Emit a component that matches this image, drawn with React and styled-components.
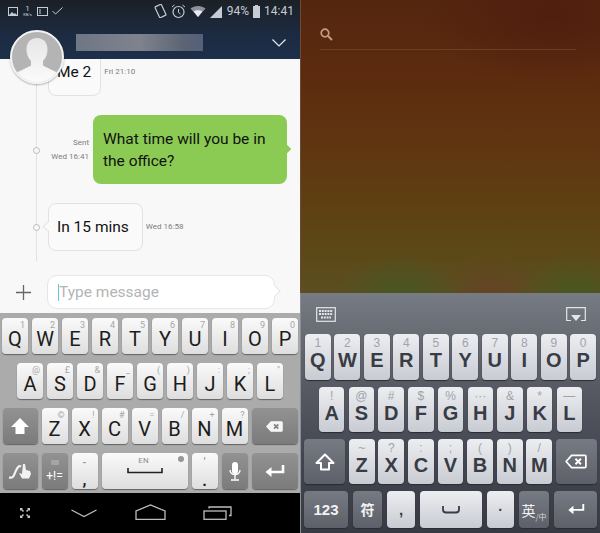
import React from "react";
import styled, { createGlobalStyle } from "styled-components";

const GlobalStyle = createGlobalStyle`
  html, body {
    margin: 0;
    padding: 0;
    background: #000;
  }
`;

const Screen = styled.div`
  display: flex;
  width: 600px;
  height: 533px;
  overflow: hidden;
`;

const Phone = styled.div`
  width: 300px;
  height: 533px;
  display: flex;
  flex-direction: column;
  position: relative;
  font-family: Roboto, "Liberation Sans", sans-serif;
`;

/* left phone */
const Header = styled.div`
  height: 59px;
  flex: none;
  background: linear-gradient(#1b2026, #1c2b42 60%, #1d2f4a);
  display: flex;
  flex-direction: column;
`;
const StatusBar = styled.div`
  height: 20px;
  display: flex;
  align-items: center;
  padding: 1px 6px 0 8px;
  color: #c6ccd4;
  font-size: 12px;
`;
const StatusGroup = styled.div`
  display: flex;
  align-items: center;
  gap: ${(p) => p.$gap || 4}px;
  margin-left: ${(p) => (p.$right ? "auto" : "0")};
`;
const Speed = styled.div`
  display: flex;
  flex-direction: column;
  align-items: center;
  font-size: 8px;
  line-height: 7px;
  width: 11px;
  & small {
    font-size: 4px;
    line-height: 5px;
  }
`;
const TitleRow = styled.div`
  display: flex;
  align-items: center;
  margin-top: 13px;
  height: 17px;
  padding: 0 14px 0 76px;
`;
const BlurName = styled.div`
  width: 127px;
  height: 17px;
  background: linear-gradient(90deg, #6f7684, #7e838e 50%, #5c6474 85%, #54607a);
`;
const Chevron = styled.svg`
  margin-left: auto;
`;
const Avatar = styled.div`
  position: absolute;
  left: 10px;
  top: 30px;
  width: 54px;
  height: 54px;
  box-sizing: border-box;
  border-radius: 50%;
  border: 2px solid #f2f2f2;
  box-shadow: 0 1px 2px rgba(0, 0, 0, 0.3);
  overflow: hidden;
  background: linear-gradient(#b4b4b4 75%, #e8e8e8);
  z-index: 2;
`;
const Chat = styled.div`
  height: 254px;
  flex: none;
  background: #f8f8f9;
  position: relative;
  overflow: hidden;
`;
const Timeline = styled.div`
  position: absolute;
  left: 36px;
  top: 0;
  width: 1px;
  height: 202px;
  background: #e2e2e2;
`;
const MsgRow = styled.div`
  position: relative;
  display: flex;
  align-items: center;
  gap: ${(p) => p.$gap || 3}px;
  justify-content: ${(p) => (p.$out ? "flex-end" : "flex-start")};
  margin-top: ${(p) => p.$top}px;
  padding: ${(p) => (p.$out ? "0 13px 0 0" : "0 0 0 48px")};
`;
const Dot = styled.i`
  position: absolute;
  left: 33px;
  top: 50%;
  margin-top: -3px;
  width: 7px;
  height: 7px;
  box-sizing: border-box;
  border: 1.5px solid #bbb;
  border-radius: 50%;
  background: #f8f8f9;
`;
const Bubble = styled.div`
  position: relative;
  box-sizing: border-box;
  height: ${(p) => (p.$out ? 69 : 48)}px;
  width: ${(p) => (p.$out ? "194px" : "auto")};
  padding: ${(p) => (p.$out ? "12px 10px" : p.$tail ? "0 13px 0 8px" : "0 9px 0 8px")};
  display: flex;
  align-items: center;
  border-radius: 8px;
  font-size: 15.5px;
  line-height: 22px;
  color: #111;
  background: ${(p) => (p.$out ? "#8bcb53" : "#fafafa")};
  border: ${(p) => (p.$out ? "0" : "1.5px solid #e2e2e2")};
  &::after {
    content: "";
    position: absolute;
    top: 50%;
    width: 6px;
    height: 6px;
    margin-top: -4px;
    transform: rotate(45deg);
    ${(p) =>
      p.$out
        ? "right: -3px; background: #8bcb53;"
        : p.$tail
        ? "left: -5px; background: #fafafa; border-left: 1.5px solid #e2e2e2; border-bottom: 1.5px solid #e2e2e2;"
        : "display: none;"}
  }
`;
const Meta = styled.div`
  font-size: 8px;
  line-height: 14px;
  color: #7c7c7c;
  text-align: right;
`;
const InputRow = styled.div`
  display: flex;
  align-items: center;
  margin-top: 24px;
  padding-left: 16px;
  gap: 16px;
`;
const MessageInput = styled.div`
  position: relative;
  box-sizing: border-box;
  width: 228px;
  height: 34px;
  padding-left: 10px;
  display: flex;
  align-items: center;
  background: #fff;
  border: 1.5px solid #e6e6e6;
  border-radius: 10px;
  font-size: 15.5px;
  color: #b4b4b4;
  &::after {
    content: "";
    position: absolute;
    right: -5px;
    top: 50%;
    width: 7px;
    height: 7px;
    margin-top: -5px;
    background: #fff;
    border-right: 1.5px solid #e6e6e6;
    border-top: 1.5px solid #e6e6e6;
    transform: rotate(45deg);
  }
`;
const Caret = styled.i`
  width: 1px;
  height: 17px;
  background: #63c9d2;
`;

const LeftKeyboard = styled.div`
  height: 180px;
  flex: none;
  box-sizing: border-box;
  padding: 5px 2px 4px;
  background: #ababab;
  display: flex;
  flex-direction: column;
  gap: 9px;
`;
const LeftRow = styled.div`
  display: flex;
  justify-content: center;
  gap: 4px;
  height: 36px;
`;
const LeftKey = styled.div`
  position: relative;
  box-sizing: border-box;
  width: ${(p) => p.$w || 26}px;
  flex: none;
  display: flex;
  align-items: center;
  justify-content: center;
  padding-top: ${(p) => (p.$flat ? 0 : 6)}px;
  border-radius: 4px;
  font-size: 20px;
  line-height: 16px;
  color: #1c1c1c;
  background: ${(p) =>
    p.$dark
      ? "linear-gradient(#929292, #7b7b7b)"
      : "linear-gradient(#fafafa, #dedede)"};
  box-shadow: 0 1px 1px #626262;
`;
const LeftHint = styled.span`
  position: absolute;
  top: 2px;
  right: 3px;
  font-size: 9px;
  line-height: 10px;
  color: #a6a6a6;
`;
const LeftStack = styled.div`
  display: flex;
  flex-direction: column;
  align-items: center;
  gap: ${(p) => p.$gap || 3}px;
  color: ${(p) => p.$color || "#222"};
  font-size: ${(p) => p.$size || 14}px;
  line-height: 14px;
  font-weight: ${(p) => p.$weight || 400};
`;
const StackHint = styled.span`
  color: #9a9a9a;
  font-size: 10px;
`;
const EnLabel = styled.span`
  position: absolute;
  top: 3px;
  left: 0;
  right: 2px;
  text-align: center;
  font-size: 8px;
  line-height: 10px;
  color: #8c8c8c;
`;
const LangDot = styled.i`
  position: absolute;
  top: 3px;
  right: 4px;
  width: 6px;
  height: 6px;
  border-radius: 50%;
  background: #979797;
`;
const NavBar = styled.div`
  flex: 1;
  background: #000;
  display: flex;
  align-items: center;
  padding-left: 20px;
`;
const NavIcon = styled.svg`
  margin-left: ${(p) => p.$left || 0}px;
  margin-top: ${(p) => p.$top || 0}px;
`;

/* right phone */
const Wallpaper = styled.div`
  height: 293px;
  flex: none;
  box-sizing: border-box;
  padding: 26px 24px 0 19px;
  border-left: 1px solid #6d4a38;
  background:
    radial-gradient(ellipse 65px 45px at 100px 298px, rgba(62, 92, 38, 0.7), transparent),
    radial-gradient(ellipse 60px 45px at 275px 298px, rgba(62, 92, 30, 0.7), transparent),
    radial-gradient(ellipse 50px 45px at 190px 298px, rgba(105, 62, 40, 0.7), transparent),
    radial-gradient(ellipse 130px 70px at 250px 15px, rgba(78, 28, 14, 0.8), transparent),
    linear-gradient(#55260f, #5c2b0f 25%, #5f3310 45%, #5f3f12 68%, #5c4918 88%, #5c4e20);
`;
const SearchLine = styled.div`
  height: 23px;
  border-bottom: 1px solid #6d3d24;
`;
const RightKeyboard = styled.div`
  flex: 1;
  display: flex;
  flex-direction: column;
  border-left: 1px solid #8a8d94;
  background: linear-gradient(#777b83, #5d6069 30%, #434650 70%, #373a42);
`;
const Toolbar = styled.div`
  height: 41px;
  flex: none;
  box-sizing: border-box;
  display: flex;
  justify-content: space-between;
  align-items: center;
  padding: 2px 14px 0 15px;
`;
const RightRows = styled.div`
  display: flex;
  flex-direction: column;
  gap: 7px;
  padding: 0 3px 5px;
`;
const RightRow = styled.div`
  display: flex;
  gap: ${(p) => p.$gap || 3.8}px;
  height: ${(p) => p.$h}px;
  padding: 0 ${(p) => p.$pad || 0}px;
`;
const RightKey = styled.div`
  box-sizing: border-box;
  flex: ${(p) => (p.$w ? `0 0 ${p.$w}px` : "1")};
  min-width: 0;
  display: flex;
  flex-direction: column;
  align-items: center;
  justify-content: ${(p) => (p.$top ? "flex-start" : "center")};
  padding-top: ${(p) => (p.$top ? 2 : 0)}px;
  border-radius: 4px;
  font-family: "Liberation Sans", sans-serif;
  font-weight: 700;
  font-size: ${(p) => p.$size || 20}px;
  line-height: 20px;
  color: ${(p) => (p.$dark ? "#f2f3f5" : "#383c44")};
  background: ${(p) =>
    p.$dark
      ? "linear-gradient(#767a82, #5d6069)"
      : "linear-gradient(#eceef1, #c9cbd3)"};
  box-shadow: 0 1px 1px #2a2c32;
`;
const RightHint = styled.span`
  font-size: 12px;
  line-height: 14px;
  font-weight: 400;
  color: #a0a3aa;
`;
const SmallLabel = styled.span`
  font-size: ${(p) => p.$size || 15}px;
  font-weight: ${(p) => p.$weight || 700};
  font-family: "Liberation Sans", "Noto Sans CJK SC", sans-serif;
`;
const LangKey = styled.div`
  display: flex;
  align-items: flex-end;
  font-family: "Noto Sans CJK SC", sans-serif;
  font-weight: 400;
  font-size: 14px;
  line-height: 16px;
  & small {
    font-size: 8px;
    line-height: 10px;
    margin-bottom: -4px;
    color: #d2d4d8;
  }
`;

const leftRows = [
  [["Q", "1"], ["W", "2"], ["E", "3"], ["R", "4"], ["T", "5"], ["Y", "6"], ["U", "7"], ["I", "8"], ["O", "9"], ["P", "0"]],
  [["A", "@"], ["S", "£"], ["D", "&"], ["F", "_"], ["G", "("], ["H", ")"], ["J", ":"], ["K", ";"], ["L", '"']],
];
const leftThird = [["Z", "©"], ["X", "!"], ["C", "#"], ["V", "="], ["B", "/"], ["N", "+"], ["M", "?"]];

const rightFirst = [["Q", "1"], ["W", "2"], ["E", "3"], ["R", "4"], ["T", "5"], ["Y", "6"], ["U", "7"], ["I", "8"], ["O", "9"], ["P", "0"]];
const rightSecond = [["A", "!"], ["S", "@"], ["D", "#"], ["F", "$"], ["G", "%"], ["H", "···"], ["J", "&"], ["K", "*"], ["L", "—"]];
const rightThird = [["Z", "~"], ["X", "?"], ["C", ":"], ["V", ";"], ["B", "("], ["N", ")"], ["M", "/"]];

const BackspaceIcon = ({ w = 20, h = 13, fill = "#fff", cross = "#7d7d7d", open }) => (
  <svg width={w} height={h} viewBox="0 0 20 13">
    <path
      d="M6 1h12a1 1 0 0 1 1 1v9a1 1 0 0 1-1 1H6L1 6.5z"
      fill={open ? "none" : fill}
      stroke={fill}
      strokeWidth="1.6"
      strokeLinejoin="round"
    />
    <path d="M9.5 4l5 5M14.5 4l-5 5" stroke={open ? fill : cross} strokeWidth="1.8" />
  </svg>
);

const ReturnIcon = ({ w = 21, h = 15, sw = 2.6 }) => (
  <svg width={w} height={h} viewBox="0 0 21 15">
    <path d="M19 1v7H4" fill="none" stroke="#fff" strokeWidth={sw} />
    <path d="M7.5 3L1.5 8l6 5z" fill="#fff" />
  </svg>
);

const App = () => {
  return (
    <Screen>
      <GlobalStyle />
      <Phone>
        <Header>
          <StatusBar>
            <StatusGroup $gap={4}>
              <svg width="10" height="9" viewBox="0 0 10 9">
                <rect x="0.5" y="0.5" width="9" height="8" fill="none" stroke="#c6ccd4" />
                <path d="M1 8l3-3 2 2 1-1 2 2z" fill="#c6ccd4" />
              </svg>
              <Speed>
                <span>1</span>
                <small>KB/s</small>
              </Speed>
              <svg width="11" height="9" viewBox="0 0 11 9">
                <rect x="0.5" y="0.5" width="10" height="8" fill="none" stroke="#c6ccd4" />
                <path d="M3 2v5" stroke="#c6ccd4" />
              </svg>
              <svg width="11" height="8" viewBox="0 0 11 8">
                <path d="M0.5 4l3 3 7-6.5" fill="none" stroke="#c6ccd4" />
              </svg>
            </StatusGroup>
            <StatusGroup $right $gap={4}>
              <svg width="13" height="14" viewBox="0 0 13 14">
                <rect x="3" y="1" width="7" height="12" rx="1" transform="rotate(-25 6.5 7)" fill="none" stroke="#c6ccd4" strokeWidth="1.2" />
              </svg>
              <svg width="15" height="15" viewBox="0 0 15 15">
                <circle cx="7.5" cy="8" r="5.5" fill="none" stroke="#c6ccd4" strokeWidth="1.2" />
                <path d="M7.5 5v3.5l2 1.5M1 3l2.5-2M14 3l-2.5-2" fill="none" stroke="#c6ccd4" />
              </svg>
              <svg width="16" height="12" viewBox="0 0 16 12">
                <path d="M0.5 3.5C4.5 0 11.5 0 15.5 3.5L8 12z" fill="#8b929c" />
                <path d="M3.6 6.6C6 4.8 10 4.8 12.4 6.6L8 12z" fill="#e8eaee" />
              </svg>
              <svg width="13" height="13" viewBox="0 0 13 13">
                <path d="M0 13L12 1v12z" fill="#c6ccd4" />
              </svg>
              <span>94%</span>
              <svg width="7" height="13" viewBox="0 0 7 13">
                <path d="M2 0h3v1h2v12H0V1h2z" fill="#c6ccd4" />
              </svg>
              <span>14:41</span>
            </StatusGroup>
          </StatusBar>
          <TitleRow>
            <BlurName />
            <Chevron width="14" height="8" viewBox="0 0 14 8">
              <path d="M0.5 0.5L7 7l6.5-6.5" fill="none" stroke="#e8ebef" strokeWidth="1.2" />
            </Chevron>
          </TitleRow>
        </Header>
        <Avatar>
          <svg width="50" height="50" viewBox="0 0 50 50">
            <defs>
              <linearGradient id="person" x1="0" y1="0" x2="0" y2="1">
                <stop offset="0" stopColor="#e6e6e6" />
                <stop offset="1" stopColor="#fbfbfb" />
              </linearGradient>
            </defs>
            <path
              d="M25 6c-7 0-10.500 5-10.500 11.500 0 5 2 9 4.500 11.500v4.500L4 41l-1 9h44l-1-9-15-7.500V29c2.500-2.500 4.500-6.500 4.500-11.500C35.500 11 32 6 25 6z"
              fill="url(#person)"
            />
          </svg>
        </Avatar>
        <Chat>
          <Timeline />
          <MsgRow $top={-11}>
            <Bubble>Me 2</Bubble>
            <Meta>Fri 21:10</Meta>
          </MsgRow>
          <MsgRow $out $top={19} $gap={4}>
            <Dot />
            <Meta>
              Sent
              <br />
              Wed 16:41
            </Meta>
            <Bubble $out>What time will you be in the office?</Bubble>
          </MsgRow>
          <MsgRow $top={19}>
            <Dot />
            <Bubble $tail>In 15 mins</Bubble>
            <Meta>Wed 16:58</Meta>
          </MsgRow>
          <InputRow>
            <svg width="15" height="15" viewBox="0 0 15 15">
              <path d="M7.500 0v15M0 7.500h15" stroke="#666" strokeWidth="1.300" />
            </svg>
            <MessageInput>
              <Caret />
              Type message
            </MessageInput>
          </InputRow>
        </Chat>
        <LeftKeyboard>
          {leftRows.map((row) => (
            <LeftRow key={row[0][0]}>
              {row.map(([letter, hint]) => (
                <LeftKey key={letter}>
                  <LeftHint>{hint}</LeftHint>
                  {letter}
                </LeftKey>
              ))}
            </LeftRow>
          ))}
          <LeftRow>
            <LeftKey $dark $flat $w={35}>
              <svg width="18" height="16" viewBox="0 0 18 16">
                <path d="M9 0l9 9h-4.500v7h-9V9H0z" fill="#fff" />
              </svg>
            </LeftKey>
            {leftThird.map(([letter, hint]) => (
              <LeftKey key={letter}>
                <LeftHint>{hint}</LeftHint>
                {letter}
              </LeftKey>
            ))}
            <LeftKey $dark $flat $w={46}>
              <BackspaceIcon w={19} h={11} fill="#f4f4f4" />
            </LeftKey>
          </LeftRow>
          <LeftRow>
            <LeftKey $dark $flat $w={35}>
              <svg width="24" height="18" viewBox="0 0 24 18">
                <path d="M1 15.500c5 1 5-3 7-7s3-5 5-4" fill="none" stroke="#f2f2f2" strokeWidth="2.200" />
                <path d="M15 2h2l1 6 4 1 1 3-2 4.500h-7l-3-5.500 3 1z" fill="#f2f2f2" />
              </svg>
            </LeftKey>
            <LeftKey $dark $flat>
              <LeftStack $color="#fff" $size={12} $gap={4}>
                <svg width="8" height="5" viewBox="0 0 8 5">
                  <rect width="8" height="5" rx="1" fill="#a5a5a5" />
                </svg>
                +!=
              </LeftStack>
            </LeftKey>
            <LeftKey $flat>
              <LeftStack $size={16} $weight={700}>
                <StackHint>-</StackHint>
                <span>,</span>
              </LeftStack>
            </LeftKey>
            <LeftKey $flat $w={86}>
              <EnLabel>EN</EnLabel>
              <LangDot />
              <svg width="36" height="6" viewBox="0 0 36 6">
                <path d="M1 0v4.500h34V0" fill="none" stroke="#222" strokeWidth="1.600" />
              </svg>
            </LeftKey>
            <LeftKey $flat>
              <LeftStack $size={16} $weight={700} $gap={5}>
                <StackHint>'</StackHint>
                <span>.</span>
              </LeftStack>
            </LeftKey>
            <LeftKey $dark $flat>
              <svg width="12" height="19" viewBox="0 0 12 19">
                <rect x="3" y="0" width="6" height="12" rx="3" fill="#fff" />
                <path d="M1 8c0 6 10 6 10 0M6 13v4M2 18h8" fill="none" stroke="#fff" strokeWidth="1.400" />
              </svg>
            </LeftKey>
            <LeftKey $dark $flat $w={46}>
              <ReturnIcon />
            </LeftKey>
          </LeftRow>
        </LeftKeyboard>
        <NavBar>
          <svg width="10" height="10" viewBox="0 0 10 10">
            <path d="M0 0h3l-1 1 2 2-1 1-2-2-1 1zM10 0v3L9 2 7 4 6 3l2-2-1-1zM0 10V7l1 1 2-2 1 1-2 2 1 1zM10 10H7l1-1-2-2 1-1 2 2 1-1z" fill="#c8c8c8" />
          </svg>
          <NavIcon $left={41} width="26" height="9" viewBox="0 0 26 9">
            <path d="M0.500 1L13 7.500 25.500 1" fill="none" stroke="#bdbdbd" strokeWidth="1.300" />
          </NavIcon>
          <NavIcon $left={38} $top={-2} width="31" height="16" viewBox="0 0 31 16">
            <path d="M1 15.300V7L15.500 1 30 7v8.300z" fill="none" stroke="#bdbdbd" strokeWidth="1.300" />
          </NavIcon>
          <NavIcon $left={37} width="29" height="14" viewBox="0 0 29 14">
            <rect x="1" y="5" width="22" height="8.300" fill="none" stroke="#bdbdbd" strokeWidth="1.300" />
            <path d="M6 2.500 6 1h22v8.500h-2" fill="none" stroke="#bdbdbd" strokeWidth="1.300" />
          </NavIcon>
        </NavBar>
      </Phone>

      <Phone>
        <Wallpaper>
          <SearchLine>
            <svg width="13" height="13" viewBox="0 0 13 13">
              <circle cx="5" cy="5" r="3.800" fill="none" stroke="#c49a84" strokeWidth="1.700" />
              <path d="M8 8l4 4" stroke="#c49a84" strokeWidth="2" />
            </svg>
          </SearchLine>
        </Wallpaper>
        <RightKeyboard>
          <Toolbar>
            <svg width="20" height="15" viewBox="0 0 20 15">
              <rect x="0.700" y="0.700" width="18.600" height="13.600" fill="none" stroke="#e4e5e8" strokeWidth="1.200" />
              <path d="M3 4h14M3 7h14M5 10.500h10" stroke="#e4e5e8" strokeWidth="1.800" strokeDasharray="2 0.800" />
            </svg>
            <svg width="20" height="15" viewBox="0 0 20 15">
              <path d="M5 13.500H0.700V0.700h18.600v12.800H15" fill="none" stroke="#e4e5e8" strokeWidth="1.200" />
              <path d="M5 8h10l-5 6z" fill="#e4e5e8" />
            </svg>
          </Toolbar>
          <RightRows>
            <RightRow $h={46} $pad={1}>
              {rightFirst.map(([letter, hint]) => (
                <RightKey key={letter} $top>
                  <RightHint>{hint}</RightHint>
                  {letter}
                </RightKey>
              ))}
            </RightRow>
            <RightRow $h={45} $pad={15} $gap={4.300}>
              {rightSecond.map(([letter, hint]) => (
                <RightKey key={letter} $top>
                  <RightHint>{hint}</RightHint>
                  {letter}
                </RightKey>
              ))}
            </RightRow>
            <RightRow $h={45} $pad={0} $gap={3.800}>
              <RightKey $dark $w={41}>
                <svg width="20" height="18" viewBox="0 0 20 18">
                  <path d="M10 1.500L18.500 10h-4.500v6.500H6V10H1.500z" fill="none" stroke="#fff" strokeWidth="2" strokeLinejoin="round" />
                </svg>
              </RightKey>
              {rightThird.map(([letter, hint]) => (
                <RightKey key={letter} $top>
                  <RightHint>{hint}</RightHint>
                  {letter}
                </RightKey>
              ))}
              <RightKey $dark $w={41}>
                <BackspaceIcon w={22} h={15} open />
              </RightKey>
            </RightRow>
            <RightRow $h={37} $gap={5}>
              <RightKey $dark $w={44}>
                <SmallLabel>123</SmallLabel>
              </RightKey>
              <RightKey $dark $w={29}>
                <SmallLabel $size={14} $weight={700}>符</SmallLabel>
              </RightKey>
              <RightKey $w={28} $size={15}>,</RightKey>
              <RightKey $w={62}>
                <svg width="18" height="8" viewBox="0 0 18 8">
                  <path d="M1 0v3.500a3 3 0 0 0 3 3h10a3 3 0 0 0 3-3V0" fill="none" stroke="#383c44" strokeWidth="1.800" />
                </svg>
              </RightKey>
              <RightKey $w={27} $size={14}>·</RightKey>
              <RightKey $dark $w={30}>
                <LangKey>
                  英<small>/中</small>
                </LangKey>
              </RightKey>
              <RightKey $dark $w={43}>
                <ReturnIcon w={18} h={13} sw={2.200} />
              </RightKey>
            </RightRow>
          </RightRows>
        </RightKeyboard>
      </Phone>
    </Screen>
  );
};

export default App;
